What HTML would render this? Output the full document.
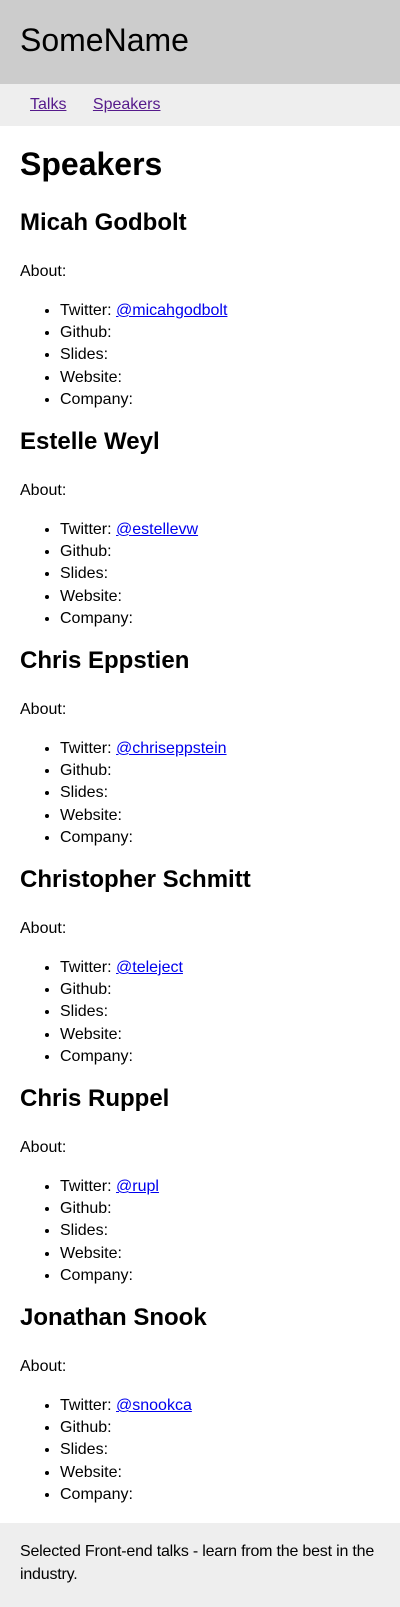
<!DOCTYPE html>
<html><head><meta charset="utf-8"><style>
*{box-sizing:border-box}
body{margin:0;width:400px;font-family:"Liberation Sans",Arial,sans-serif;font-size:16px;color:#000;background:#fff}
header{background:#ccc;height:84px;padding:0 20px}
header .t{font-size:32px;line-height:84px;margin:0;font-weight:normal;position:relative;top:-2px}
nav{background:#eee;height:42px;padding:0 20px 0 30px;line-height:42px}
nav a{color:#551a8b;margin-right:22px}
main{padding:0 20px;overflow:hidden;height:1397px}
h1{font-size:32px;line-height:40px;margin:18px 0 24px}
h2{font-size:24px;line-height:30px;margin:0 0 23px}
p{margin:0 0 17px;line-height:22px}
ul{margin:0 0 16px;padding-left:40px;line-height:22.2px}
a{color:#00e}
footer{background:#eee;height:84px;padding:17px 2px 0 20px;line-height:23px;letter-spacing:-0.2px}
</style></head><body>
<header><div class="t">SomeName</div></header>
<nav><a href="#">Talks</a> <a href="#">Speakers</a></nav>
<main>
<h1>Speakers</h1>
<h2>Micah Godbolt</h2><p>About:</p><ul><li>Twitter: <a href="#">@micahgodbolt</a></li><li>Github:</li><li>Slides:</li><li>Website:</li><li>Company:</li></ul>
<h2>Estelle Weyl</h2><p>About:</p><ul><li>Twitter: <a href="#">@estellevw</a></li><li>Github:</li><li>Slides:</li><li>Website:</li><li>Company:</li></ul>
<h2>Chris Eppstien</h2><p>About:</p><ul><li>Twitter: <a href="#">@chriseppstein</a></li><li>Github:</li><li>Slides:</li><li>Website:</li><li>Company:</li></ul>
<h2>Christopher Schmitt</h2><p>About:</p><ul><li>Twitter: <a href="#">@teleject</a></li><li>Github:</li><li>Slides:</li><li>Website:</li><li>Company:</li></ul>
<h2>Chris Ruppel</h2><p>About:</p><ul><li>Twitter: <a href="#">@rupl</a></li><li>Github:</li><li>Slides:</li><li>Website:</li><li>Company:</li></ul>
<h2>Jonathan Snook</h2><p>About:</p><ul><li>Twitter: <a href="#">@snookca</a></li><li>Github:</li><li>Slides:</li><li>Website:</li><li>Company:</li></ul>
</main>
<footer>Selected Front-end talks - learn from the best in the industry.</footer>
</body></html>
